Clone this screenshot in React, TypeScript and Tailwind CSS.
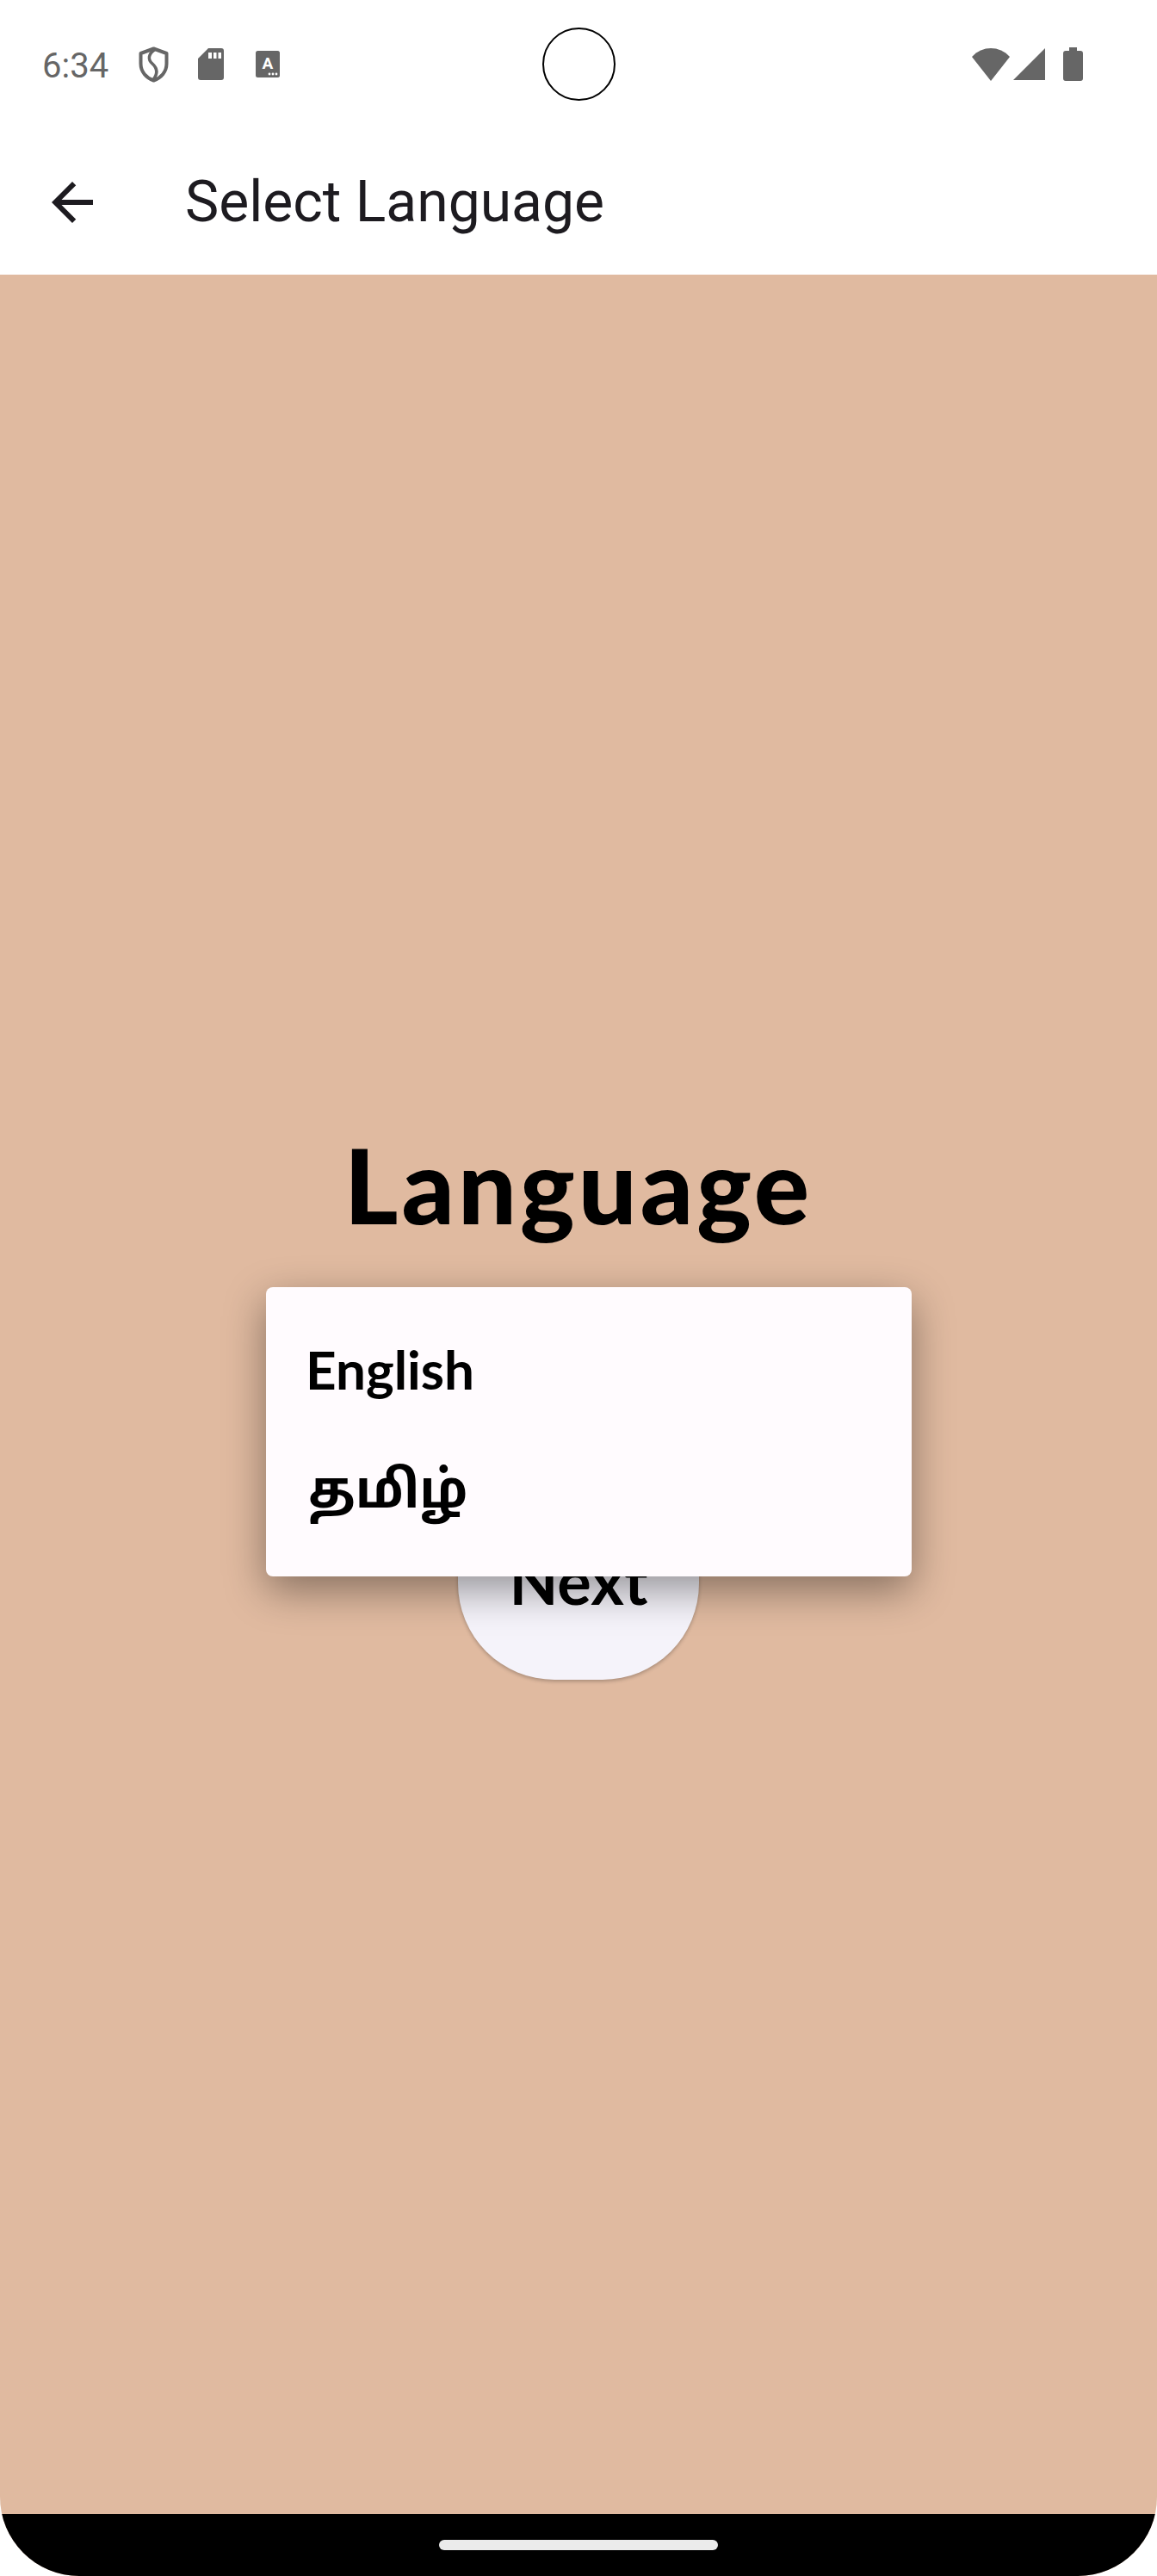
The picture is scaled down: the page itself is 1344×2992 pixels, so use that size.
const StatusIcons = () => (
  <div className="flex items-center">
    {/* shield */}
    <svg width="35" height="42" viewBox="0 0 35 42" className="ml-[35px]" fill="none" stroke="#666666" strokeWidth="4">
      <path d="M17.5 2.5 L32.5 8 V20 C32.5 29.5 26 36.5 17.5 39.5 C9 36.5 2.5 29.5 2.5 20 V8 Z" strokeLinejoin="round" />
      <path d="M19 3.5 C11 9 10.5 15 16 20 C21.5 25 23 31 17 38.5" strokeWidth="3.5" />
    </svg>
    {/* sd card */}
    <svg width="30" height="37" viewBox="0 0 30 37" className="ml-[34px]">
      <path fill="#666666" fillRule="evenodd" d="M12 0 H27 a3 3 0 0 1 3 3 V34 a3 3 0 0 1 -3 3 H3 a3 3 0 0 1 -3 -3 V12 Z M12 5 V12 H16 V5 Z M18 5 V12 H21.5 V5 Z M23.5 5 V12 H27 V5 Z" />
    </svg>
    {/* keyboard style A */}
    <svg width="28" height="31" viewBox="0 0 28 31" className="ml-[37px]">
      <rect width="28" height="31" rx="2.5" fill="#666666" />
      <text x="14" y="21" textAnchor="middle" fontFamily="Roboto, sans-serif" fontWeight="700" fontSize="19" fill="#ffffff">A</text>
      <circle cx="16" cy="27" r="1.4" fill="#ffffff" />
      <circle cx="20" cy="27" r="1.4" fill="#ffffff" />
      <circle cx="24" cy="27" r="1.4" fill="#ffffff" />
    </svg>
  </div>
);

const SystemIcons = () => (
  <div className="flex items-center">
    <svg width="44" height="38" viewBox="0 0 44 38">
      <path fill="#666666" d="M0 10 C12 -3.3 32 -3.3 44 10 L22 38 Z" />
    </svg>
    <svg width="37" height="37" viewBox="0 0 37 37" className="ml-[4px]">
      <path fill="#666666" d="M37 0 V37 H0 Z" />
    </svg>
    <svg width="23" height="39" viewBox="0 0 23 39" className="ml-[21px]">
      <path fill="#666666" d="M7 0 H16 V4 H20 a3 3 0 0 1 3 3 V36 a3 3 0 0 1 -3 3 H3 a3 3 0 0 1 -3 -3 V7 a3 3 0 0 1 3 -3 H7 Z" />
    </svg>
  </div>
);

export default function App() {
  return (
    <div className="h-[2992px] w-[1344px] bg-white">
      <div className="flex h-full flex-col overflow-hidden rounded-b-[92px] bg-[#e0baa0] font-[Roboto,sans-serif]">
        <div className="bg-white">
          {/* status bar */}
          <div className="relative flex h-[149px] items-center justify-between pl-[49px] pr-[86px]">
            <div className="flex items-center">
              <span className="pt-[5px] text-[40px] leading-none text-[#666666]">6:34</span>
              <StatusIcons />
            </div>
            <SystemIcons />
            <div className="absolute left-[630px] top-[32px] h-[85px] w-[85px] rounded-full border-2 border-black" />
          </div>
          {/* app bar */}
          <div className="flex h-[170px] items-center pl-[48px] pt-[2px]">
            <svg width="72" height="72" viewBox="0 0 24 24" fill="#1d1b20">
              <path d="M20 11H7.83l5.59-5.59L12 4l-8 8 8 8 1.41-1.41L7.83 13H20v-2z" />
            </svg>
            <span className="ml-[95px] text-[66px] leading-none text-[#1d1b20]">Select Language</span>
          </div>
        </div>

        <main className="relative flex flex-1 flex-col items-center justify-center">
          <h1 className="pt-[24px] font-[Lato,sans-serif] text-[120px] font-black leading-[128px] tracking-[4px] text-black">Language</h1>
          <button className="mt-[275px] flex h-[236px] w-[280px] items-center justify-center rounded-[112px] bg-[#f5f3fa] pt-[4px] font-[Lato,sans-serif] text-[74px] font-bold text-black shadow-[0_2px_4px_rgba(0,0,0,0.25)]">
            Next
          </button>

          {/* dropdown menu, open over the button */}
          <div className="absolute left-[309px] top-[1176px] flex h-[336px] w-[750px] flex-col justify-center rounded-[8px] bg-[#fffbfe] pl-[46px] text-black shadow-[0_16px_48px_rgba(0,0,0,0.4)]">
            <div className="flex h-[140px] items-center pb-[6px] font-[Lato,sans-serif] text-[62px] font-bold leading-none">English</div>
            <div className="flex h-[140px] items-center pb-[10px] pl-[3px] font-['Noto_Sans','Noto_Sans_Tamil',Lato,sans-serif] text-[60px] font-bold leading-none">தமிழ்</div>
          </div>
        </main>

        <div className="flex h-[72px] items-start justify-center bg-black pt-[30px]">
          <div className="h-[12px] w-[324px] rounded-full bg-[#ebebeb]" />
        </div>
      </div>
    </div>
  );
}
